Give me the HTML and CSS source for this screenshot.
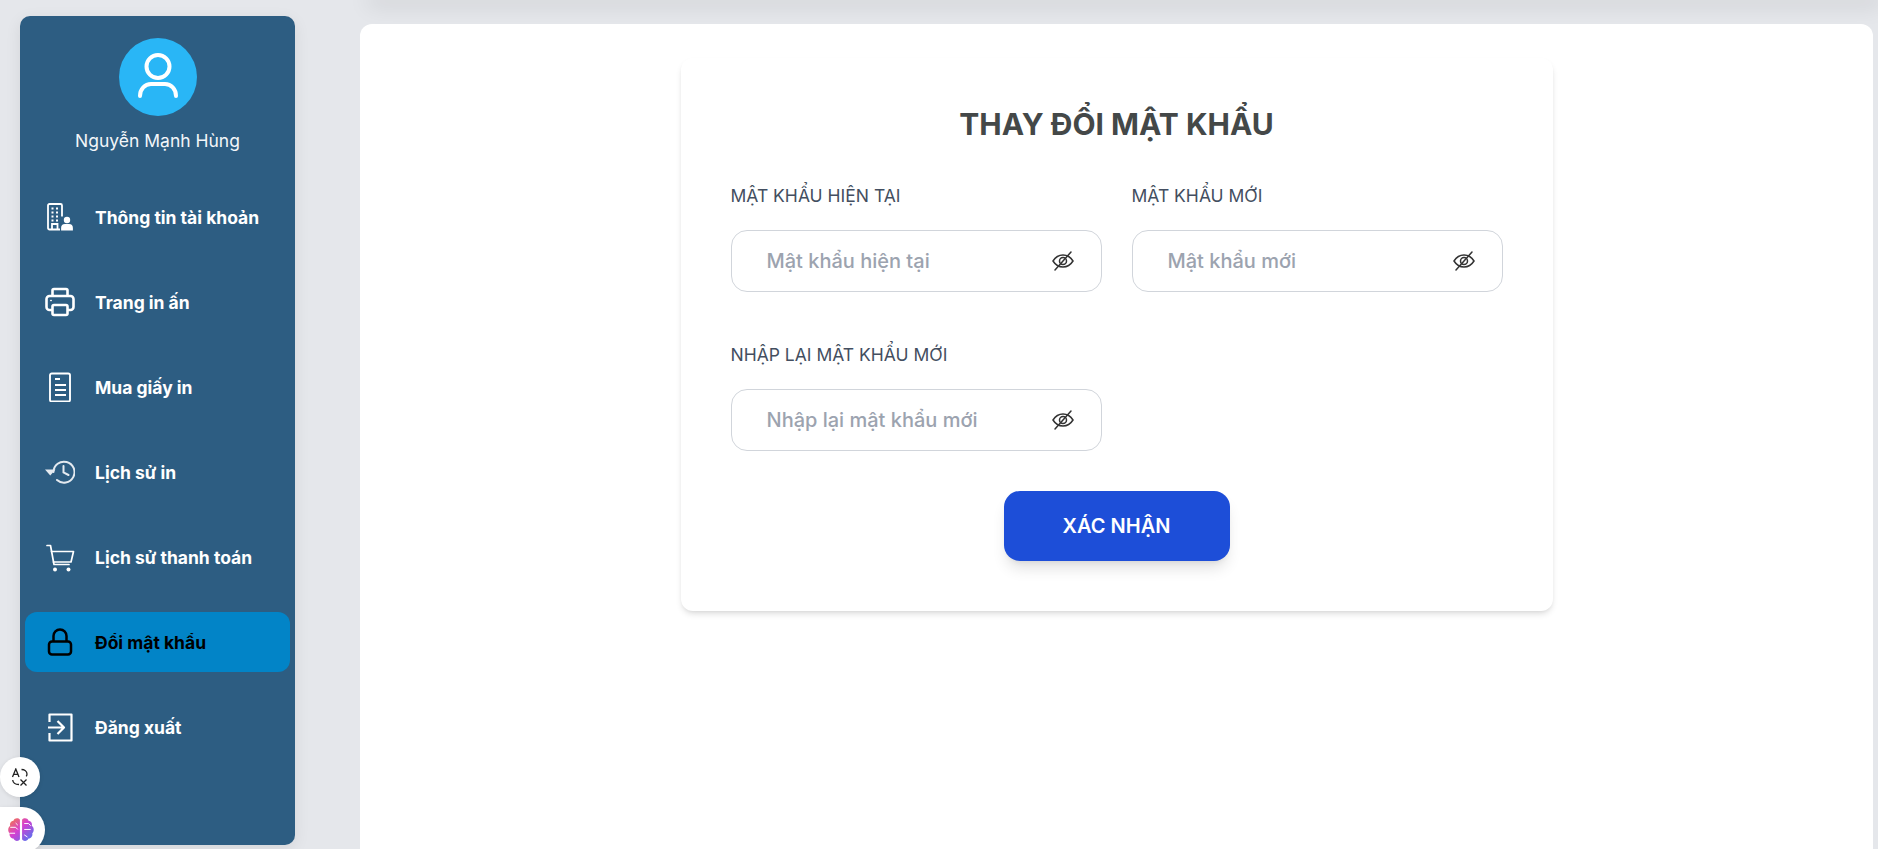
FILE: index.html
```html
<!DOCTYPE html>
<html lang="vi">
<head>
  <meta charset="UTF-8" />
  <meta name="viewport" content="width=device-width, initial-scale=1.0"/>
  <title>Thay đổi mật khẩu</title>
  <link rel="stylesheet" href="styles.css">
</head>
<body>

<aside class="sidebar">
  <div class="profile">
    <div class="avatar">
      <svg width="50" height="50" viewBox="0 0 50 50" fill="none" stroke="#fff" stroke-width="4" stroke-linecap="round">
        <circle cx="25" cy="14.500" r="11.500"/>
        <path d="M7 44c0-7 5-12 11-12h14c6 0 11 5 11 12"/>
      </svg>
    </div>
    <p class="profile-name">Nguyễn Mạnh Hùng</p>
  </div>

  <nav class="menu">
    <a class="menu-item" href="#">
      <svg class="menu-icon" viewBox="0 0 30 30" fill="none" stroke="currentColor" stroke-width="1.800">
        <path d="M15 27.500H4.500a1.500 1.500 0 0 1-1.500-1.500V3.500A1.500 1.500 0 0 1 4.500 2h11A1.500 1.500 0 0 1 17 3.500v11"/>
        <path d="M7 27v-5h5.500v5"/>
        <path d="M6.500 6.500h2M11 6.500h2M6.500 10.500h2M11 10.500h2M6.500 14.500h2M11 14.500h2M6.500 18.500h2M11 18.500h2" stroke-width="2"/>
        <circle cx="22" cy="18" r="2.300" fill="currentColor"/>
        <path d="M17 27.500v-1.500c0-1.700 1.300-3 3-3h4c1.700 0 3 1.300 3 3v1.500z" fill="currentColor"/>
      </svg>
      <span>Thông tin tài khoản</span>
    </a>
    <a class="menu-item" href="#">
      <svg class="menu-icon" viewBox="0 0 30 30" fill="none" stroke="currentColor" stroke-width="2.600" stroke-linejoin="round">
        <path d="M7.500 9V3.500a1.500 1.500 0 0 1 1.500-1.500h12a1.500 1.500 0 0 1 1.500 1.500V9"/>
        <path d="M7.500 23H4.500a3 3 0 0 1-3-3v-8a3 3 0 0 1 3-3h21a3 3 0 0 1 3 3v8a3 3 0 0 1-3 3h-3"/>
        <rect x="7.500" y="18" width="15" height="10" rx="1.500"/>
        <circle cx="6" cy="13.500" r="0.500" fill="currentColor" stroke-width="1"/>
      </svg>
      <span>Trang in ấn</span>
    </a>
    <a class="menu-item" href="#">
      <svg class="menu-icon" viewBox="0 0 30 30" fill="none" stroke="currentColor" stroke-width="1.900">
        <rect x="5" y="1.500" width="20" height="28" rx="1.800"/>
        <path d="M10 7h5M10 13h11M10 18h11M10 23h11"/>
      </svg>
      <span>Mua giấy in</span>
    </a>
    <a class="menu-item" href="#">
      <svg class="menu-icon" viewBox="0 0 30 30" fill="none" stroke="#e4eaf0" stroke-width="2" stroke-linecap="round">
        <path d="M8.500 15A10.500 10.500 0 1 1 12 23"/>
        <path d="M0 12.500h10.500l-5.250 6z" fill="#e4eaf0" stroke="none"/>
        <path d="M18.500 9v6.500l5 2.500"/>
      </svg>
      <span>Lịch sử in</span>
    </a>
    <a class="menu-item" href="#">
      <svg class="menu-icon" viewBox="0 0 30 30" fill="none" stroke="currentColor" stroke-width="1.700" stroke-linecap="round" stroke-linejoin="round">
        <path d="M2 3.500h3.500l3.500 19h15"/>
        <path d="M6.500 9.500h22l-2.500 10.500H8.500"/>
        <circle cx="10" cy="27.500" r="2" fill="currentColor" stroke="none"/>
        <circle cx="23.500" cy="27.500" r="2" fill="currentColor" stroke="none"/>
      </svg>
      <span>Lịch sử thanh toán</span>
    </a>
    <a class="menu-item active" href="#">
      <svg class="menu-icon" viewBox="0 0 30 30" fill="none" stroke="currentColor" stroke-width="2.500" stroke-linejoin="round">
        <rect x="4" y="14.500" width="22" height="13" rx="3"/>
        <path d="M8.500 14V9a6.500 6.500 0 0 1 13 0v5"/>
      </svg>
      <span>Đổi mật khẩu</span>
    </a>
    <a class="menu-item" href="#">
      <svg class="menu-icon" viewBox="0 0 30 30" fill="none" stroke="currentColor" stroke-width="2.200" stroke-linejoin="round">
        <path d="M4.500 10V2.500h22v26h-22V21"/>
        <path d="M3 15.500h16M12.500 9l6.500 6.500-6.500 6.500"/>
      </svg>
      <span>Đăng xuất</span>
    </a>
  </nav>
</aside>

<main class="content">
  <div class="topbar"></div>
  <section class="panel">
    <form class="card">
      <h1 class="card-title">THAY ĐỔI MẬT KHẨU</h1>
      <div class="fields">
        <div class="field">
          <label for="currentPass">Mật khẩu hiện tại</label>
          <div class="input-box">
            <input id="currentPass" type="password" placeholder="Mật khẩu hiện tại" />
            <svg class="eye" viewBox="0 0 24 24" fill="none" stroke="currentColor" stroke-width="1.500" stroke-linecap="round">
              <path d="M2 12c2.500-4 6-6 10-6s7.500 2 10 6c-2.500 4-6 6-10 6s-7.500-2-10-6z"/>
              <circle cx="12" cy="12" r="3.500"/>
              <path d="M20 3L4 21"/>
            </svg>
          </div>
        </div>
        <div class="field">
          <label for="newPass">Mật khẩu mới</label>
          <div class="input-box">
            <input id="newPass" type="password" placeholder="Mật khẩu mới" />
            <svg class="eye" viewBox="0 0 24 24" fill="none" stroke="currentColor" stroke-width="1.500" stroke-linecap="round">
              <path d="M2 12c2.500-4 6-6 10-6s7.500 2 10 6c-2.500 4-6 6-10 6s-7.500-2-10-6z"/>
              <circle cx="12" cy="12" r="3.500"/>
              <path d="M20 3L4 21"/>
            </svg>
          </div>
        </div>
        <div class="field">
          <label for="confirmPass">Nhập lại mật khẩu mới</label>
          <div class="input-box">
            <input id="confirmPass" type="password" placeholder="Nhập lại mật khẩu mới" />
            <svg class="eye" viewBox="0 0 24 24" fill="none" stroke="currentColor" stroke-width="1.500" stroke-linecap="round">
              <path d="M2 12c2.500-4 6-6 10-6s7.500 2 10 6c-2.500 4-6 6-10 6s-7.500-2-10-6z"/>
              <circle cx="12" cy="12" r="3.500"/>
              <path d="M20 3L4 21"/>
            </svg>
          </div>
        </div>
      </div>
      <button class="submit-btn" type="button">XÁC NHẬN</button>
    </form>
  </section>
</main>

<!-- floating extension buttons -->
<div class="float-btn translate-btn">
  <svg width="18" height="18" viewBox="0 0 18 18" fill="none" stroke="#222" stroke-width="1.300">
    <path d="M1.500 9L4.800 1l3.200 8M2.800 6.300h4"/>
    <path d="M10.500 1.500c3 0 5.500 1.800 5.500 4.500 0 1-.3 1.700-.8 2.400M8 16.500c-3.500 0-6-1.500-6.300-4.500"/>
    <path d="M9.500 11.500l6 6M15.500 11.500l-6 6"/>
  </svg>
</div>
<div class="float-btn brain-btn">
  <svg width="28" height="28" viewBox="0 0 26 26">
    <defs>
      <linearGradient id="brainGrad" x1="0" y1="0" x2="1" y2="1">
        <stop offset="0" stop-color="#f7803c"/>
        <stop offset="0.450" stop-color="#d63fd0"/>
        <stop offset="1" stop-color="#3f7bf5"/>
      </linearGradient>
    </defs>
    <path fill="url(#brainGrad)" d="M12 3.500C10.500 1.500 7 1.800 6 4.300 3.500 4.500 2.300 7 3 9 .8 10.500.5 14 2.500 16c-.6 2.500 1 4.800 3.500 5 1 2.600 4.800 3 6 .6zM14 3.500c1.500-2 5-1.700 6 .8 2.500.2 3.700 2.700 3 4.700 2.200 1.500 2.500 5 .5 7 .6 2.500-1 4.800-3.500 5-1 2.600-4.800 3-6 .6z"/>
    <path fill="none" stroke="#fff" stroke-width="0.900" d="M3 10.500h5l2 2M2.500 16h5M8 6.500l2 2M16 7h4l2 2M16 12.500h6M16 17.500l3 2"/>
  </svg>
</div>

</body>
</html>
```

FILE: styles.css
```css
* {
  box-sizing: border-box;
}

html, body {
  height: 100%;
}

body {
  font-family: Inter, "Noto Sans", sans-serif;
  margin: 0;
  background-color: #e5e7eb;
  display: flex;
  overflow: hidden;
}

.sidebar {
  width: 275px;
  height: 829px;
  margin: 16px 0 0 20px;
  flex-shrink: 0;
  background-color: #2d5d82;
  border-radius: 10px;
  box-shadow: 0 4px 16px rgba(0, 0, 0, 0.08);
  padding: 0 5px;
  color: #fff;
}

.profile {
  display: flex;
  flex-direction: column;
  align-items: center;
  padding-top: 22px;
}

.avatar {
  width: 78px;
  height: 78px;
  border-radius: 50%;
  background-color: #29b6f6;
  display: flex;
  align-items: center;
  justify-content: center;
}

.profile-name {
  margin: 13px 0 0;
  font-size: 17.5px;
  line-height: 24px;
  color: #f3f6f9;
}

.menu {
  margin-top: 34px;
  display: flex;
  flex-direction: column;
  gap: 25px;
}

.menu-item {
  height: 60px;
  display: flex;
  align-items: center;
  padding-left: 20px;
  gap: 20px;
  border-radius: 12px;
  color: #fff;
  font-size: 17.5px;
  font-weight: 700;
  text-decoration: none;
}

.menu-item.active {
  background-color: #0284c7;
  color: #000;
}

.menu-icon {
  width: 30px;
  height: 30px;
  flex-shrink: 0;
}

.content {
  flex: 1;
  min-width: 0;
  margin: 0 5px 0 65px;
  display: flex;
  flex-direction: column;
}

.topbar {
  height: 0;
  margin: 0 -5px 24px 12px;
  flex-shrink: 0;
  box-shadow: 0 0 22px 4px rgba(0, 0, 0, 0.16);
}

.panel {
  flex: 1;
  background-color: #fff;
  border-radius: 12px 12px 0 0;
  display: flex;
  justify-content: center;
  padding-top: 34px;
  position: relative;
}

.card {
  width: 872px;
  height: 553px;
  padding: 0 50px;
  border-radius: 12px;
  background-color: #fff;
  box-shadow: 0 4px 6px -1px rgba(0, 0, 0, 0.12), 0 2px 4px -2px rgba(0, 0, 0, 0.08);
  display: flex;
  flex-direction: column;
}

.card-title {
  margin: 45px 0 0;
  text-align: center;
  font-size: 30px;
  line-height: 42px;
  font-weight: 700;
  color: #444848;
}

.fields {
  margin-top: 39px;
  display: grid;
  grid-template-columns: 371px 371px;
  column-gap: 30px;
  row-gap: 51px;
}

.field label {
  display: block;
  font-size: 17.5px;
  line-height: 24px;
  text-transform: uppercase;
  color: #434e60;
  margin-bottom: 22px;
}

.input-box {
  height: 62px;
  display: flex;
  align-items: center;
  padding: 0 26px 0 35px;
  border: 1px solid #d1d5db;
  border-radius: 16px;
  background-color: #fff;
}

.input-box input {
  flex: 1;
  min-width: 0;
  border: 0;
  outline: 0;
  background: none;
  padding: 0;
  font-family: inherit;
  font-size: 20px;
  font-weight: 500;
  color: #111827;
}

.input-box input::placeholder {
  color: #9ca3af;
  opacity: 1;
}

.eye {
  width: 24px;
  height: 24px;
  color: #333;
  flex-shrink: 0;
}

.submit-btn {
  align-self: center;
  width: 226px;
  height: 70px;
  margin-top: 40px;
  border: 0;
  border-radius: 16px;
  background-color: #1d4ed8;
  color: #fff;
  font-family: inherit;
  font-size: 20px;
  font-weight: 600;
  box-shadow: 0 10px 15px -3px rgba(0, 0, 0, 0.12), 0 4px 6px -4px rgba(0, 0, 0, 0.1);
  cursor: pointer;
}

/* floating extension buttons */
.float-btn {
  position: fixed;
  left: 0;
  background-color: #fff;
  display: flex;
  align-items: center;
  justify-content: center;
}

.translate-btn {
  top: 757px;
  width: 40px;
  height: 40px;
  border-radius: 50%;
  box-shadow: 0 1px 4px rgba(0, 0, 0, 0.1);
}

.brain-btn {
  top: 807px;
  width: 45px;
  height: 46px;
  border-radius: 0 23px 23px 0;
  padding-right: 3px;
  box-shadow: 0 1px 4px rgba(0, 0, 0, 0.1);
}
```
